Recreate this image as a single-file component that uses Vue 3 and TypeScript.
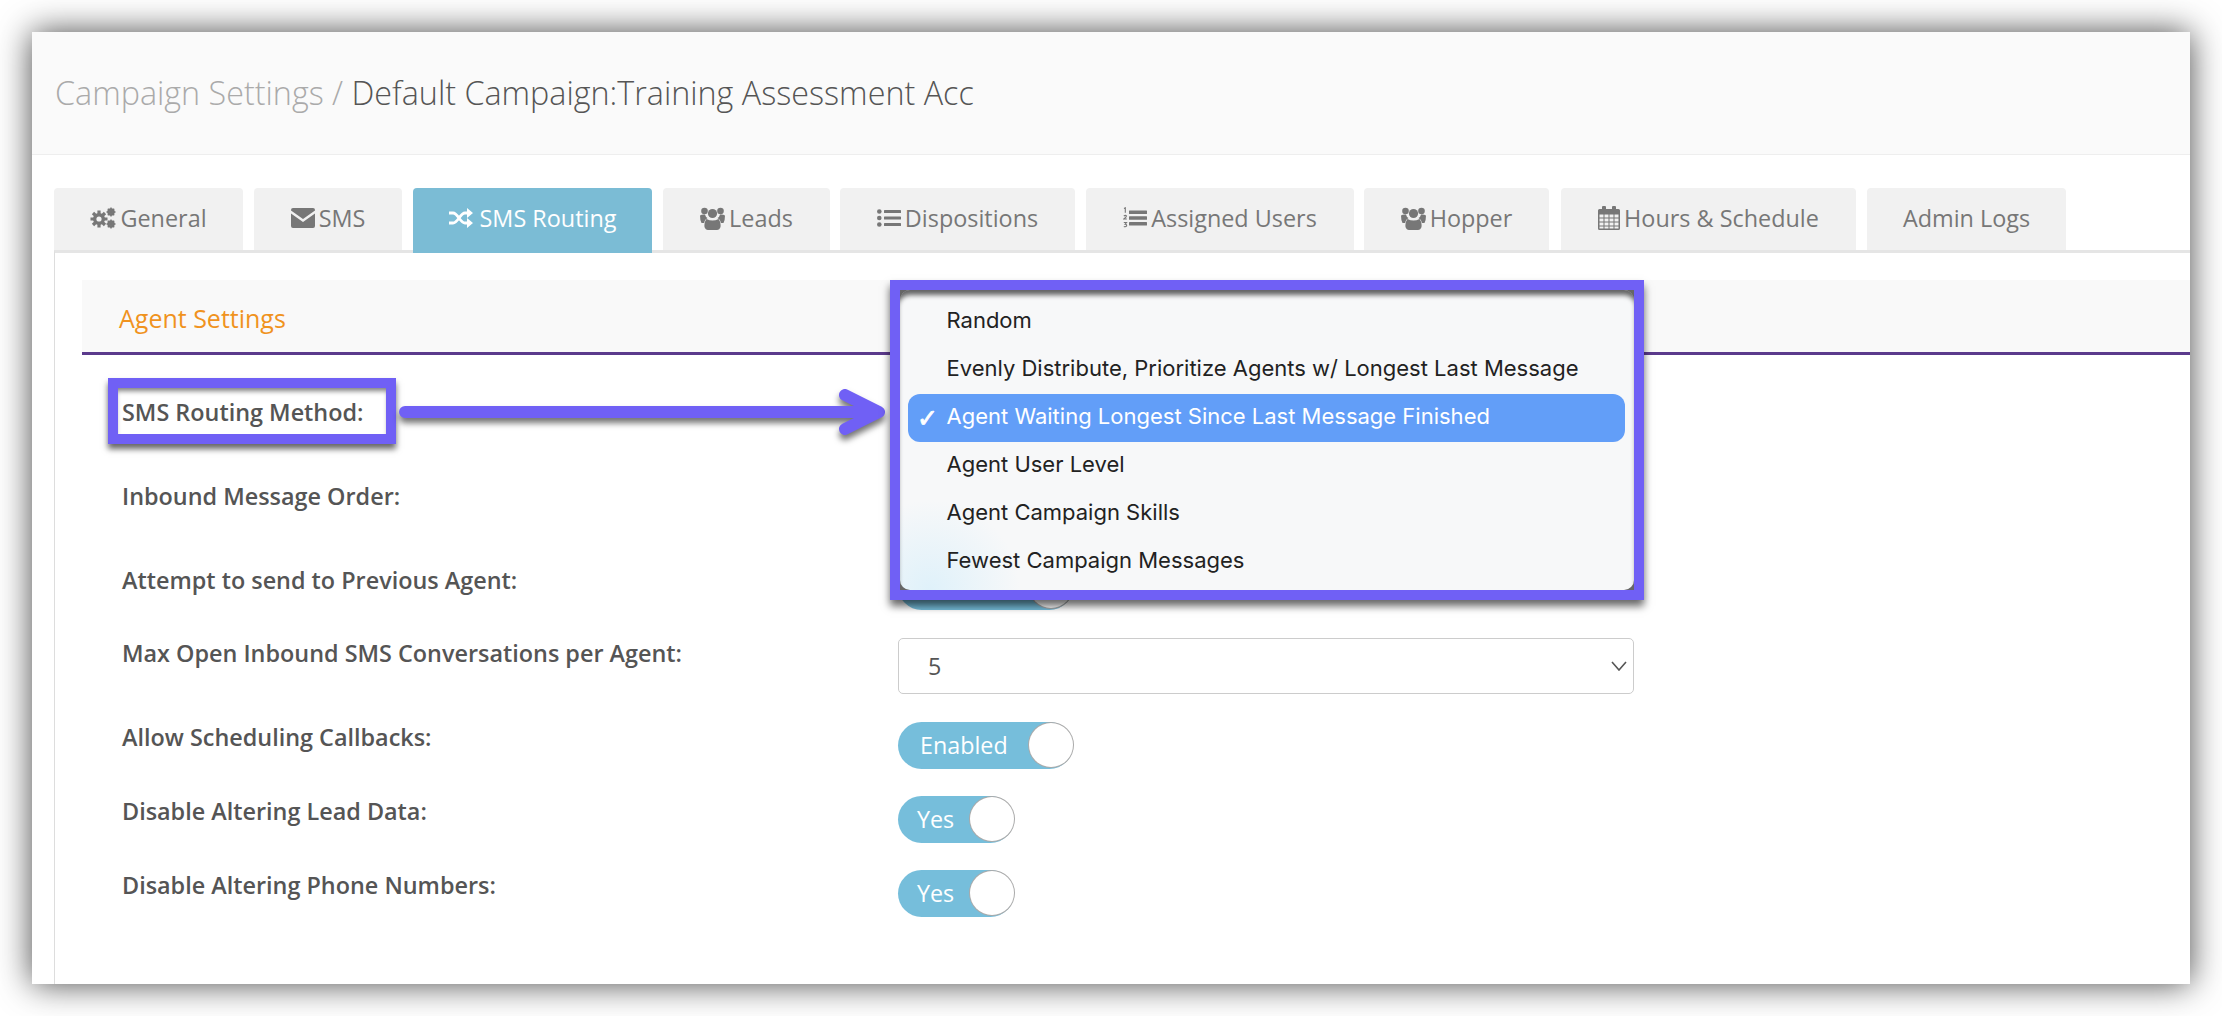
<script setup lang="ts">
interface Tab { label: string; icon: string; active?: boolean }
const tabs: Tab[] = [
  { label: 'General', icon: 'cogs' },
  { label: 'SMS', icon: 'mail' },
  { label: 'SMS Routing', icon: 'shuffle', active: true },
  { label: 'Leads', icon: 'users' },
  { label: 'Dispositions', icon: 'list' },
  { label: 'Assigned Users', icon: 'ol' },
  { label: 'Hopper', icon: 'users' },
  { label: 'Hours & Schedule', icon: 'cal' },
  { label: 'Admin Logs', icon: '' },
]
const options = [
  'Random',
  'Evenly Distribute, Prioritize Agents w/ Longest Last Message',
  'Agent Waiting Longest Since Last Message Finished',
  'Agent User Level',
  'Agent Campaign Skills',
  'Fewest Campaign Messages',
]
</script>

<template>
  <div class="window">
    <header class="head"><span class="crumb">Campaign Settings / </span><span class="current">Default Campaign:Training Assessment Acc</span></header>
    <nav class="tabs">
      <a v-for="t in tabs" :key="t.label" class="tab" :class="{ active: t.active }">
        <svg v-if="t.icon === 'cogs'" class="ico" viewBox="0 0 26 22" width="26" height="22"><g fill="currentColor"><circle cx="9" cy="12" r="6"/><g stroke="currentColor" stroke-width="3.200"><path d="M9 3.500v17M.5 12h17M3 6l12 12M15 6 3 18"/></g><circle cx="9" cy="12" r="2.600" fill="#f1f1f1"/></g><g fill="none" stroke="currentColor"><circle cx="21" cy="5" r="2.700" stroke-width="2"/><path d="M21 .5v9M16.500 5h9M17.800 1.800l6.400 6.400M24.200 1.800l-6.400 6.400" stroke-width="1.400"/><circle cx="21" cy="17" r="2.700" stroke-width="2"/><path d="M21 12.500v9M16.500 17h9M17.800 13.800l6.400 6.400M24.200 13.800l-6.400 6.400" stroke-width="1.400"/></g></svg>
        <svg v-else-if="t.icon === 'mail'" class="ico" viewBox="0 0 24 20" width="24" height="20"><path fill="currentColor" d="M2 0h20a2 2 0 0 1 2 2v.6L12 11 0 2.600V2a2 2 0 0 1 2-2zM0 5.500l12 8.400 12-8.400V18a2 2 0 0 1-2 2H2a2 2 0 0 1-2-2z"/></svg>
        <svg v-else-if="t.icon === 'shuffle'" class="ico shuffle" viewBox="0 0 24 20" width="24" height="20"><g fill="none" stroke="currentColor" stroke-width="2.800"><path d="M0 5h4c5 0 7 10 12 10h4M0 15h4c5 0 7-10 12-10h4"/></g><path fill="currentColor" d="M18 0l6 5-6 5zM18 10l6 5-6 5z"/></svg>
        <svg v-else-if="t.icon === 'users'" class="ico" viewBox="0 0 25 23" width="25" height="23"><g fill="currentColor"><circle cx="12.500" cy="6.500" r="4.600"/><circle cx="4.500" cy="4" r="3.300"/><circle cx="20.500" cy="4" r="3.300"/><path d="M6.500 12q6 3 12 0 2.500 3 2 8-1 3-3.500 3H8q-2.500 0-3.500-3-.5-5 2-8zM0 8.500q2-1.500 5-1 .5 2.500 2.500 3.500Q4.500 12.500 4 16H1.500Q0 13.500 0 8.500zM25 8.500q-2-1.500-5-1-.5 2.500-2.500 3.500 3 1.500 3.500 5h2.500Q25 13.500 25 8.500z"/></g></svg>
        <svg v-else-if="t.icon === 'list'" class="ico" viewBox="0 0 24 20" width="24" height="20"><g fill="currentColor"><circle cx="2.300" cy="3.500" r="2.300"/><circle cx="2.300" cy="10" r="2.300"/><circle cx="2.300" cy="16.500" r="2.300"/><rect x="7" y="2" width="17" height="3" rx=".6"/><rect x="7" y="8.500" width="17" height="3" rx=".6"/><rect x="7" y="15" width="17" height="3" rx=".6"/></g></svg>
        <svg v-else-if="t.icon === 'ol'" class="ico" viewBox="0 0 24 22" width="24" height="22"><g fill="currentColor"><rect x="6" y="3.500" width="18" height="3.400" rx=".5"/><rect x="6" y="9.300" width="18" height="3.400" rx=".5"/><rect x="6" y="15" width="18" height="3.400" rx=".5"/></g><g fill="none" stroke="currentColor" stroke-width="1.100"><path d="M1 1.500l1.300-.7v5M.8 9q1.800-1.300 2.700 0 0 1-2.700 3h3M.8 15.500h2.700l-1.400 1.700q1.800 0 1.500 1.700-1 1.500-2.800.5"/></g></svg>
        <svg v-else-if="t.icon === 'cal'" class="ico" viewBox="0 0 22 24" width="22" height="24"><path fill="currentColor" fill-rule="evenodd" d="M1.500 3H4V1.500a1.500 1.500 0 0 1 4 0V3h6V1.500a1.500 1.500 0 0 1 4 0V3h2.500A1.500 1.500 0 0 1 22 4.500v18a1.500 1.500 0 0 1-1.500 1.500h-19A1.500 1.500 0 0 1 0 22.500v-18A1.500 1.500 0 0 1 1.500 3zM1.500 8.500v3h4v-3zm5 0v3h4v-3zm5 0v3h4v-3zm5 0v3h4v-3zM1.500 12.500v3h4v-3zm5 0v3h4v-3zm5 0v3h4v-3zm5 0v3h4v-3zM1.500 16.500v3h4v-3zm5 0v3h4v-3zm5 0v3h4v-3zm5 0v3h4v-3zM1.500 20.500v2h4v-2zm5 0v2h4v-2zm5 0v2h4v-2zm5 0v2h4v-2z"/></svg>
        <span>{{ t.label }}</span>
      </a>
    </nav>
    <div class="panel">
      <h2 class="section">Agent Settings</h2>
      <div class="form">
        <div class="row"><label>SMS Routing Method:</label><div class="select"></div></div>
        <div class="row"><label>Inbound Message Order:</label><div class="select"></div></div>
        <div class="row"><label>Attempt to send to Previous Agent:</label><div class="toggle wide"><i></i></div></div>
        <div class="row"><label>Max Open Inbound SMS Conversations per Agent:</label>
          <div class="select"><span>5</span><svg class="chev" viewBox="0 0 16 10" width="16" height="10"><path d="M1 1l7 8 7-8" fill="none" stroke="#555" stroke-width="1.600"/></svg></div>
        </div>
        <div class="row"><label>Allow Scheduling Callbacks:</label><div class="toggle wide"><span>Enabled</span><i></i></div></div>
        <div class="row"><label>Disable Altering Lead Data:</label><div class="toggle"><span>Yes</span><i></i></div></div>
        <div class="row"><label>Disable Altering Phone Numbers:</label><div class="toggle"><span>Yes</span><i></i></div></div>
      </div>
    </div>
    <div class="mark-label"></div>
    <svg class="arrow" viewBox="0 0 500 70" width="500" height="70">
      <path d="M13 30H486M453 13l34 17-34 17" fill="none" stroke="#7060f5" stroke-width="12" stroke-linecap="round" stroke-linejoin="round"/>
    </svg>
    <div class="menu-frame">
      <ul class="menu">
        <li v-for="(o, i) in options" :key="o" :class="{ sel: i === 2 }"><span v-if="i === 2" class="check">✓</span>{{ o }}</li>
      </ul>
    </div>
  </div>
</template>

<style>
html, body { margin: 0; background: #fff; }
</style>
<style scoped>
.window {
  position: relative;
  margin: 32px;
  width: 2158px;
  height: 952px;
  background: #fff;
  box-shadow: 0 0 32px rgba(0, 0, 0, .72);
  overflow: hidden;
  font-family: "Open Sans", sans-serif;
  color: #555;
}
.head {
  height: 123px;
  box-sizing: border-box;
  background: #fafafa;
  border-bottom: 1px solid #eee;
  padding: 0 0 3px 23px;
  display: flex;
  align-items: center;
  font-size: 32.300px;
  font-weight: 300;
  white-space: pre;
}
.crumb { color: #aaa; }
.current { color: #555; }
.tabs {
  display: flex;
  padding: 33px 0 0 22px;
  height: 62px;
}
.tab {
  height: 62px;
  box-sizing: border-box;
  background: #f1f1f1;
  border-radius: 4px 4px 0 0;
  color: #777;
  font-size: 23.400px;
  display: flex;
  align-items: center;
  justify-content: center;
  gap: 4px;
  padding-bottom: 2px;
  margin-right: 11px;
}
.tab:nth-child(1) { width: 189px; }
.tab:nth-child(2) { width: 148px; }
.tab:nth-child(3) { width: 239px; }
.tab:nth-child(4) { width: 167px; margin-right: 10px; }
.tab:nth-child(5) { width: 235px; }
.tab:nth-child(6) { width: 268px; margin-right: 10px; }
.tab:nth-child(7) { width: 185px; margin-right: 12px; }
.tab:nth-child(8) { width: 295px; }
.tab:nth-child(9) { width: 199px; }
.tab.active { background: #7bbcd5; color: #fff; height: 65px; position: relative; z-index: 1; padding-bottom: 5px; }
.ico { flex: none; }
.ico.shuffle { margin-right: 3px; }
.panel {
  margin-left: 22px;
  height: 731px;
  border-top: 3px solid #e5e5e5;
  border-left: 1px solid #ddd;
  padding: 27px 0 0 27px;
}
.section {
  margin: 0;
  background: #f9f9f9;
  border-bottom: 3px solid #5b3a8c;
  box-sizing: border-box;
  height: 75px;
  padding: 4px 0 0 37px;
  display: flex;
  align-items: center;
  font-size: 25px;
  font-weight: 400;
  color: #f0931e;
}
.form { padding: 42px 0 0 40px; }
.row {
  display: grid;
  grid-template-columns: 776px 736px;
  align-items: start;
}
.row:nth-child(1) { height: 84px; }
.row:nth-child(2) { height: 82px; }
.row:nth-child(3) { height: 75px; }
.row:nth-child(4) { height: 84px; }
.row:nth-child(5) { height: 74px; }
.row:nth-child(6) { height: 74px; }
.row:nth-child(7) { height: 50px; }
.row label {
  font-size: 23.400px;
  font-weight: 600;
  color: #555;
  line-height: 30px;
}
.row:nth-child(3) label { padding-top: 2px; }
.select {
  box-sizing: border-box;
  height: 56px;
  border: 1px solid #ccc;
  border-radius: 5px;
  padding-left: 29px;
  font-size: 23.300px;
  color: #555;
  display: flex;
  align-items: center;
  justify-content: space-between;
  background: #fff;
}
.chev { margin-right: 6px; }
.toggle {
  position: relative;
  width: 116px;
  height: 47px;
  border-radius: 24px;
  background: #76bedb;
  color: #fff;
  font-size: 23.300px;
  display: flex;
  align-items: center;
  padding: 0 0 2px 19px;
  box-sizing: border-box;
}
.toggle.wide { width: 175px; padding-left: 22px; }
.toggle i {
  position: absolute;
  right: 0;
  top: 1px;
  width: 44px;
  height: 44px;
  border-radius: 50%;
  background: #fff;
  box-shadow: 0 0 0 1px #aaa;
}
.mark-label {
  position: absolute;
  left: 76px;
  top: 346px;
  width: 268px;
  height: 46px;
  border: 10px solid #7060f5;
  box-shadow: 0 5px 6px rgba(0, 0, 0, .6), inset 0 5px 5px -2px rgba(0, 0, 0, .5);
}
.arrow {
  position: absolute;
  left: 360px;
  top: 350px;
  overflow: visible;
  filter: drop-shadow(0 5px 3px rgba(0, 0, 0, .55));
}
.menu-frame {
  position: absolute;
  left: 858px;
  top: 248px;
  width: 734px;
  height: 300px;
  border: 10px solid #7060f5;
  box-shadow: 0 6px 8px rgba(0, 0, 0, .6);
  background: #666;
}
.menu {
  list-style: none;
  margin: 0;
  height: 300px;
  box-sizing: border-box;
  padding: 8px 9px 0 8px;
  background: radial-gradient(circle at 30px 300px, #dff1fa 0, #f7f8f9 90px);
  border-radius: 10px;
  box-shadow: inset 0 7px 5px -2px rgba(0, 0, 0, .6);
  font-family: Inter, sans-serif;
  font-size: 22px;
  color: #222;
}
.menu li {
  position: relative;
  height: 48px;
  line-height: 44px;
  padding-left: 38.500px;
  border-radius: 12px;
  white-space: nowrap;
}
.menu li.sel { background: #629ef8; color: #fff; }
.check {
  position: absolute;
  left: 9px;
  top: 3px;
  font-family: "DejaVu Sans", sans-serif;
  font-size: 25px;
  -webkit-text-stroke: .8px #fff;
}
</style>
